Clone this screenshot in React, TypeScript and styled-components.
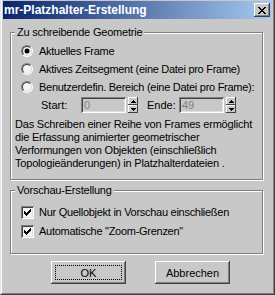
import React from "react";
import styled, { createGlobalStyle } from "styled-components";

const FACE = "#c8c8c8";
const LIGHT = "#ffffff";
const SHADOW = "#808080";
const DARK = "#404040";

const Global = createGlobalStyle`
  html, body { margin: 0; padding: 0; background: ${FACE}; }
  body {
    font-family: "Liberation Sans", Arial, sans-serif;
    font-size: 11px;
    color: #000;
  }
  * { box-sizing: border-box; }
`;

const Window = styled.div`
  width: 275px;
  height: 295px;
  display: flex;
  flex-direction: column;
  background: ${FACE};
  border-style: solid;
  border-width: 0 1px 1px 1px;
  border-color: ${FACE} ${DARK} ${DARK} #e4e4e4;
`;

const Frame = styled.div`
  flex: 1;
  display: flex;
  flex-direction: column;
  padding: 1px;
  border-style: solid;
  border-width: 0 1px 1px 1px;
  border-color: ${FACE} ${SHADOW} ${SHADOW} ${LIGHT};
`;

const TitleBar = styled.div`
  height: 18px;
  display: flex;
  align-items: center;
  padding: 0 2px 0 1px;
  background: linear-gradient(to right, #0a246a, #a6caf0);
`;

const Title = styled.span`
  color: #fff;
  font-weight: bold;
  font-size: 12px;
  white-space: nowrap;
`;

const CloseButton = styled.div`
  margin-left: auto;
  width: 16px;
  height: 14px;
  display: flex;
  align-items: center;
  justify-content: center;
  background: ${FACE};
  box-shadow: inset -1px -1px 0 ${DARK}, inset 1px 1px 0 ${LIGHT},
    inset -2px -2px 0 ${SHADOW};
  svg { display: block; }
`;

const Body = styled.div`
  flex: 1;
  display: flex;
  flex-direction: column;
  padding: 13px 9px 0 7px;
`;

const GroupBox = styled.div<{ $pt: number; $pb: number; $mt?: number }>`
  position: relative;
  margin-top: ${(p) => p.$mt ?? 0}px;
  padding: ${(p) => p.$pt}px 4px ${(p) => p.$pb}px 4px;
  border: 1px solid ${SHADOW};
  box-shadow: inset 1px 1px 0 ${LIGHT}, 1px 1px 0 ${LIGHT};
  display: flex;
  flex-direction: column;
`;

const GroupLabel = styled.span`
  position: absolute;
  top: -9px;
  left: 4px;
  height: 16px;
  line-height: 16px;
  padding: 0 2px;
  background: ${FACE};
  white-space: nowrap;
  letter-spacing: -0.2px;
`;

const OptionRow = styled.label<{ $mt?: number; $gap: number }>`
  height: 16px;
  display: flex;
  align-items: center;
  gap: ${(p) => p.$gap}px;
  margin: ${(p) => p.$mt ?? 0}px 0 0 6px;
  white-space: nowrap;
  letter-spacing: -0.28px;
`;

const RadioOuter = styled.span`
  width: 12px;
  height: 12px;
  border-radius: 50%;
  border: 1px solid;
  border-color: ${SHADOW} ${LIGHT} ${LIGHT} ${SHADOW};
  flex: none;
  display: flex;
`;

const RadioInner = styled.span`
  flex: 1;
  border-radius: 50%;
  border: 1px solid;
  border-color: ${DARK} #e0e0e0 #e0e0e0 ${DARK};
  background: #f4f4f4;
  display: flex;
  align-items: center;
  justify-content: center;
`;

const RadioDot = styled.span`
  width: 4px;
  height: 4px;
  border-radius: 50%;
  background: #000;
  box-shadow: 0 0 0 0.5px #000;
`;

const CheckBox = styled.span`
  width: 13px;
  height: 13px;
  flex: none;
  background: #f4f4f4;
  box-shadow: inset 1px 1px 0 ${SHADOW}, inset -1px -1px 0 ${LIGHT},
    inset 2px 2px 0 ${DARK}, inset -2px -2px 0 #e0e0e0;
  display: flex;
  align-items: center;
  justify-content: center;
  svg { display: block; }
`;

const RangeRow = styled.div`
  height: 16px;
  display: flex;
  align-items: center;
  margin: 2px 0 0 26px;
  white-space: nowrap;
`;

const FieldLabel = styled.span<{ $w: number; $ml?: number }>`
  width: ${(p) => p.$w}px;
  margin-left: ${(p) => p.$ml ?? 0}px;
  flex: none;
`;

const Spinner = styled.div`
  display: flex;
  gap: 2px;
  height: 16px;
`;

const SpinField = styled.div`
  width: 45px;
  height: 16px;
  padding: 0 3px;
  line-height: 16px;
  color: ${SHADOW};
  background: ${FACE};
  box-shadow: inset 1px 1px 0 ${SHADOW}, inset -1px -1px 0 ${LIGHT},
    inset 2px 2px 0 ${DARK}, inset -2px -2px 0 #e0e0e0;
`;

const SpinArrows = styled.div`
  width: 10px;
  display: flex;
  flex-direction: column;
`;

const SpinButton = styled.div`
  flex: 1;
  display: flex;
  align-items: center;
  justify-content: center;
  background: ${FACE};
  box-shadow: inset -1px -1px 0 ${DARK}, inset 1px 1px 0 ${LIGHT};
  svg { display: block; }
`;

const Paragraph = styled.p`
  margin: 5px 0 0 0;
  line-height: 13px;
  white-space: nowrap;
  letter-spacing: -0.2px;
`;

const ButtonRow = styled.div`
  display: flex;
  gap: 29px;
  margin-top: 7px;
  padding-left: 41px;
`;

const Button = styled.div<{ $focused?: boolean }>`
  position: relative;
  width: 75px;
  height: 23px;
  display: flex;
  align-items: center;
  justify-content: center;
  background: ${FACE};
  box-shadow: inset -1px -1px 0 ${DARK}, inset 1px 1px 0 ${LIGHT},
    inset -2px -2px 0 ${SHADOW};
  &::after {
    content: "";
    display: ${(p) => (p.$focused ? "block" : "none")};
    position: absolute;
    inset: 4px;
    border: 1px dotted #000;
  }
`;

const Arrow = ({ up }: { up: boolean }) => (
  <svg width="5" height="3" viewBox="0 0 5 3" shapeRendering="crispEdges">
    <polygon points={up ? "2.5,0 5,3 0,3" : "0,0 5,0 2.5,3"} fill="#000" />
  </svg>
);

const SpinBox = ({ value }: { value: string }) => (
  <Spinner>
    <SpinField>{value}</SpinField>
    <SpinArrows>
      <SpinButton>
        <Arrow up />
      </SpinButton>
      <SpinButton>
        <Arrow up={false} />
      </SpinButton>
    </SpinArrows>
  </Spinner>
);

const Radio = ({ checked }: { checked?: boolean }) => (
  <RadioOuter>
    <RadioInner>{checked && <RadioDot />}</RadioInner>
  </RadioOuter>
);

const Check = () => (
  <CheckBox>
    <svg width="7" height="7" viewBox="0 0 7 7" shapeRendering="crispEdges">
      <path
        d="M6 0h1v3h-1v1h-1v1h-1v1h-1v1h-1v-1h-1v-1h-1v-3h1v1h1v1h1v-1h1v-1h1v-1h1z"
        fill="#000"
      />
    </svg>
  </CheckBox>
);

export default function App() {
  return (
    <>
      <Global />
      <Window>
        <Frame>
          <TitleBar>
            <Title>mr-Platzhalter-Erstellung</Title>
            <CloseButton>
              <svg width="8" height="7" viewBox="0 0 8 7" shapeRendering="crispEdges">
                <path
                  d="M0 0h2v1h1v1h2v-1h1v-1h2v1h-1v1h-1v1h-1v1h1v1h1v1h1v1h-2v-1h-1v-1h-2v1h-1v1h-2v-1h1v-1h1v-1h1v-1h-1v-1h-1v-1h-1z"
                  fill="#000"
                />
              </svg>
            </CloseButton>
          </TitleBar>
          <Body>
            <GroupBox $pt={10} $pb={9}>
              <GroupLabel>Zu schreibende Geometrie</GroupLabel>
              <OptionRow $gap={6}>
                <Radio checked />
                Aktuelles Frame
              </OptionRow>
              <OptionRow $gap={6} $mt={2}>
                <Radio />
                Aktives Zeitsegment (eine Datei pro Frame)
              </OptionRow>
              <OptionRow $gap={6} $mt={2}>
                <Radio />
                Benutzerdefin. Bereich (eine Datei pro Frame):
              </OptionRow>
              <RangeRow>
                <FieldLabel $w={40}>Start:</FieldLabel>
                <SpinBox value="0" />
                <FieldLabel $w={32} $ml={9}>
                  Ende:
                </FieldLabel>
                <SpinBox value="49" />
              </RangeRow>
              <Paragraph>
                Das Schreiben einer Reihe von Frames ermöglicht
                <br />
                die Erfassung animierter geometrischer
                <br />
                Verformungen von Objekten (einschließlich
                <br />
                Topologieänderungen) in Platzhalterdateien .
              </Paragraph>
            </GroupBox>
            <GroupBox $pt={13} $pb={14} $mt={10}>
              <GroupLabel>Vorschau-Erstellung</GroupLabel>
              <OptionRow $gap={5}>
                <Check />
                Nur Quellobjekt in Vorschau einschließen
              </OptionRow>
              <OptionRow $gap={5} $mt={3}>
                <Check />
                Automatische "Zoom-Grenzen"
              </OptionRow>
            </GroupBox>
            <ButtonRow>
              <Button $focused>OK</Button>
              <Button>Abbrechen</Button>
            </ButtonRow>
          </Body>
        </Frame>
      </Window>
    </>
  );
}
